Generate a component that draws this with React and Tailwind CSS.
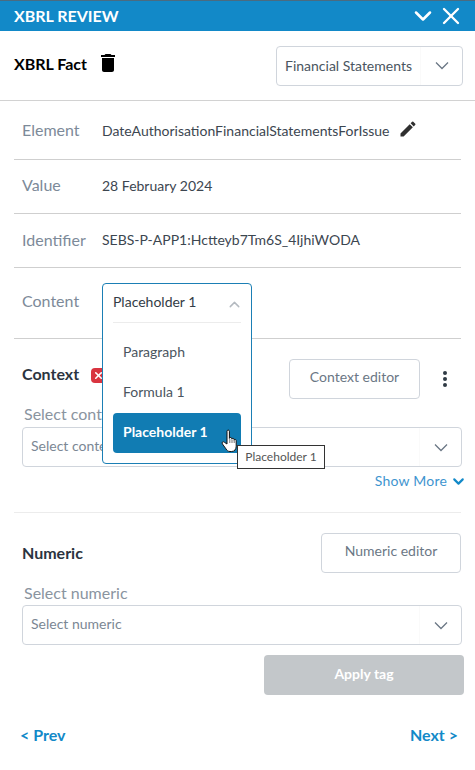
import { ChevronDown, ChevronUp, X } from 'lucide-react';

// Small chevron used on the select boxes
const SelectArrow = () => (
  <svg width="14" height="9" viewBox="0 0 14 9" fill="none" stroke="#6b7785" strokeWidth="1.3">
    <path d="M1 1.5l6 6 6-6" />
  </svg>
);

const SelectBox = ({ placeholder }) => (
  <div className="mx-[22px] flex h-10 w-[440px] items-center rounded border border-[#d0d5dc] bg-white">
    <div className="flex-1 truncate pb-[3px] pl-2 text-[14px] text-[#7b8794]">{placeholder}</div>
    <div className="flex h-full w-[42px] items-center justify-center border-l border-[#fafafa]">
      <SelectArrow />
    </div>
  </div>
);

const InfoRow = ({ label, height, children }) => (
  <div className={`mx-[14px] flex items-center border-b border-[#cfcfcf] pl-2 ${height}`}>
    <div className="w-[80px] text-[16px] text-[#7d8a99]">{label}</div>
    <div className="flex items-center text-[14px] text-[#3c4650]">{children}</div>
  </div>
);

const Pencil = () => (
  <svg width="20" height="20" viewBox="0 0 24 24" fill="#2f2f2f" className="mb-[3px] ml-[9px]">
    <path d="M3 17.25V21h3.75L17.81 9.94l-3.75-3.75L3 17.25zM20.71 7.04a1 1 0 0 0 0-1.41l-2.34-2.34a1 1 0 0 0-1.41 0l-1.83 1.83 3.75 3.75 1.83-1.83z" />
  </svg>
);

const TrashIcon = () => (
  <svg width="24" height="24" viewBox="0 0 24 24" fill="#000" className="mb-[6px] ml-[9px]">
    <path d="M6 19c0 1.1.9 2 2 2h8c1.1 0 2-.9 2-2V7H6v12zM19 4h-3.5l-1-1h-5l-1 1H5v2h14V4z" />
  </svg>
);

const HandCursor = () => (
  <svg width="18" height="26" viewBox="0 0 18 26" className="absolute left-[221px] top-[429px] z-30">
    <path
      d="M6 2.2c0-1.5 2.4-1.5 2.4 0v7.2c.3-1.4 2.4-1.2 2.4.3v.4c.3-1.2 2.3-1 2.3.4v.6c.4-1 2.1-.8 2.1.5v5.6c0 3-1.6 5.3-4.6 5.3H9c-2 0-3-1-4-2.6l-3.6-5c-1-1.5.8-2.9 2-1.6L6 15V2.2z"
      fill="#fff"
      stroke="#111"
      strokeWidth="1"
    />
    <path d="M8.8 10v4M11 10.5v3.5M13.2 11v3" stroke="#111" strokeWidth="0.6" />
  </svg>
);

export default function App() {
  return (
    <div className="relative h-[770px] w-[475px] overflow-hidden bg-white font-['Lato','Noto_Sans',sans-serif]">
      {/* title bar */}
      <div className="flex h-[31px] items-center justify-between border-t border-[#4a6b80] bg-[#1289c8] pl-[14px] pr-[10px] text-white">
        <div className="text-[16px] font-bold">XBRL REVIEW</div>
        <div className="flex items-center">
          <ChevronDown size={28} strokeWidth={2.2} />
          <X size={28} strokeWidth={2} />
        </div>
      </div>

      {/* fact header */}
      <div className="flex h-[70px] items-center justify-between border-b border-[#d2d2d2] pl-[14px] pr-3">
        <div className="flex items-center">
          <span className="mb-[3px] text-[16px] font-bold text-black">XBRL Fact</span>
          <TrashIcon />
        </div>
        <div className="flex h-10 w-[187px] items-center rounded border border-[#d0d5dc] bg-white">
          <div className="flex-1 pl-2 text-[14px] text-[#4a5560]">Financial Statements</div>
          <div className="flex h-full w-[42px] items-center justify-center border-l border-[#fafafa]">
            <SelectArrow />
          </div>
        </div>
      </div>

      <InfoRow label="Element" height="h-[59px]">
        DateAuthorisationFinancialStatementsForIssue
        <Pencil />
      </InfoRow>
      <InfoRow label="Value" height="h-[54px] pb-[3px]">28 February 2024</InfoRow>
      <InfoRow label="Identifier" height="h-[54px] pb-[2px]">SEBS-P-APP1:Hctteyb7Tm6S_4IjhiWODA</InfoRow>
      <div className="mx-[14px] flex h-[71px] items-start border-b border-[#cfcfcf] pl-2 pt-[21px] text-[16px] text-[#7d8a99]">
        Content
      </div>

      {/* context section */}
      <div className="flex h-[61px] items-start pl-[22px] pr-[14px] pt-5">
        <span className="mt-[3px] text-[16px] font-bold text-[#2b3440]">Context</span>
        <span className="ml-3 mt-[9px] flex h-[15px] w-[15px] items-center justify-center rounded-sm bg-[#d9343f]">
          <X size={11} strokeWidth={3.5} color="#fff" />
        </span>
        <button className="ml-auto h-10 w-[131px] rounded border border-[#d0d5dc] pb-[5px] text-[14px] text-[#6b7785]">
          Context editor
        </button>
        <span className="ml-[23px] mr-[14px] mt-3 flex flex-col gap-[2px]">
          <span className="h-1 w-1 rounded-full bg-[#2f3a44]" />
          <span className="h-1 w-1 rounded-full bg-[#2f3a44]" />
          <span className="h-1 w-1 rounded-full bg-[#2f3a44]" />
        </span>
      </div>
      <div className="pl-6 text-[16px] leading-[27px] text-[#8a949f]">Select context</div>
      <SelectBox placeholder="Select context" />
      <div className="mt-[3px] flex h-[20px] items-center justify-end pr-2 text-[14px] text-[#3f95cf]">
        <span className="tracking-[0.2px]">Show More</span>
        <ChevronDown size={17} strokeWidth={3} color="#1289c8" className="ml-[3px] mt-[3px]" />
      </div>
      <div className="mx-[14px] mt-[22px] h-px bg-[#ececec]" />

      {/* numeric section */}
      <div className="mt-5 flex h-10 items-center pl-[22px] pr-[14px]">
        <span className="text-[16px] font-bold text-[#2b3440]">Numeric</span>
        <button className="ml-auto h-10 w-[140px] rounded border border-[#d0d5dc] pb-[5px] text-[14px] text-[#6b7785]">
          Numeric editor
        </button>
      </div>
      <div className="mt-[7px] pl-6 text-[16px] leading-[25px] text-[#8a949f]">Select numeric</div>
      <SelectBox placeholder="Select numeric" />
      <div className="mt-[10px] flex justify-end pr-[11px]">
        <button className="h-10 w-[200px] rounded bg-[#c3c7ca] pb-[3px] text-[14px] font-bold text-white">Apply tag</button>
      </div>
      <div className="mt-[28px] flex items-center justify-between pl-5 pr-[17px] text-[16px] font-bold text-[#1289c8]">
        <span>{'< Prev'}</span>
        <span>{'Next >'}</span>
      </div>

      {/* open content dropdown */}
      <div className="absolute left-[102px] top-[283px] z-10 h-[181px] w-[150px] rounded border border-[#1b7fb5] bg-white px-[10px]">
        <div className="flex h-[39px] items-center justify-between border-b border-[#ececec] pb-[3px] text-[14px] text-[#333c46]">
          Placeholder 1
          <ChevronUp size={17} strokeWidth={2} color="#b4bac0" className="mr-[-2px] mt-[5px]" />
        </div>
        <div className="mt-[10px] flex h-10 items-center px-[10px] pb-[3px] text-[14px] text-[#4a5560]">Paragraph</div>
        <div className="flex h-10 items-center px-[10px] pb-[3px] text-[14px] text-[#4a5560]">Formula 1</div>
        <div className="flex h-10 items-center rounded bg-[#117cb3] px-[10px] pb-[3px] text-[14px] font-bold text-white">
          Placeholder 1
        </div>
      </div>

      {/* hover tooltip and pointer */}
      <div className="absolute left-[237px] top-[445px] z-20 flex h-[24px] w-[88px] items-center justify-center border border-[#333] bg-white text-[12px] text-[#555]">
        Placeholder 1
      </div>
      <HandCursor />
    </div>
  );
}
